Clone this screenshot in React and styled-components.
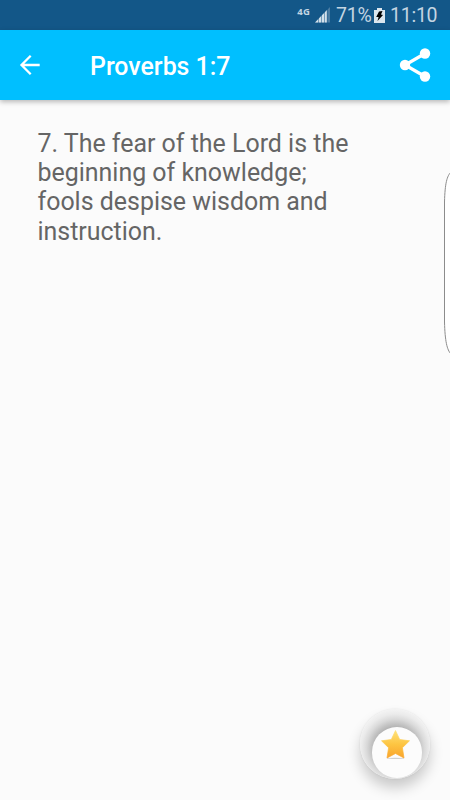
import React from "react";
import styled, { createGlobalStyle } from "styled-components";

const GlobalStyle = createGlobalStyle`
  body {
    margin: 0;
    background-color: #fbfbfb;
    font-family: Roboto, "Liberation Sans", sans-serif;
  }
`;

const Container = styled.div`
  position: relative;
  display: flex;
  flex-direction: column;
  width: 450px;
  height: 800px;
  overflow: hidden;
  background-color: #fbfbfb;
`;

const StatusBar = styled.div`
  display: flex;
  align-items: center;
  justify-content: flex-end;
  box-sizing: border-box;
  height: 30px;
  padding-right: 12px;
  background-color: #135788;
  color: #c3d5e2;
`;
const Network = styled.span`
  font-family: "Open Sans", sans-serif;
  font-size: 9.5px;
  font-weight: 700;
  letter-spacing: 0.2px;
  line-height: 10px;
  margin: 0 5px 7px 0;
`;
const StatusText = styled.span`
  font-size: 19.5px;
  letter-spacing: -0.25px;
  line-height: 30px;
  width: ${(props) => props.$width}px;
  padding-top: 2px;
  white-space: nowrap;
`;
const StatusIcon = styled.svg`
  flex: none;
  margin-right: ${(props) => props.$gap}px;
`;

const Toolbar = styled.header`
  display: flex;
  align-items: center;
  flex: none;
  box-sizing: border-box;
  height: 70px;
  padding: 0 19px 0 18px;
  background-color: #00bfff;
  color: white;
  box-shadow: 0 2px 5px rgba(0, 0, 0, 0.27);
`;
const IconButton = styled.button`
  display: flex;
  padding: 0;
  border: none;
  background: none;
  color: inherit;
  cursor: pointer;
`;
const Title = styled.h1`
  flex: 1;
  margin: 3px 0 0 48px;
  font-size: 24.9px;
  font-weight: 500;
  line-height: 30px;
`;

const Verse = styled.p`
  width: 330px;
  margin: 28.75px 0 0 37.5px;
  font-size: 24.95px;
  line-height: 29.3px;
  color: #656565;
`;

const EdgeHandle = styled.svg`
  position: absolute;
  top: 168px;
  right: 0;
`;

const Fab = styled.button`
  position: absolute;
  top: 709px;
  left: 360px;
  width: 70px;
  height: 70px;
  padding: 0;
  border: none;
  border-radius: 50%;
  background: radial-gradient(circle at 35.5px 39px, #a8a8a8 18px, #c2c2c2 24px, #dadada 29px, #ebebeb 34px, #f2f2f2 38px);
  box-shadow: 0 9px 14px rgba(0, 0, 0, 0.2), 0 0 2px rgba(0, 0, 0, 0.1);
  cursor: pointer;
`;
const FabFace = styled.span`
  position: absolute;
  top: 18px;
  left: 11.5px;
  width: 50.5px;
  height: 50.5px;
  border-radius: 50%;
  background-color: #fcfcfc;
`;
const Star = styled.svg`
  position: absolute;
  top: 2px;
  left: 8.5px;
`;

const App = () => {
  return (
    <Container>
      <GlobalStyle />
      <StatusBar>
        <Network>4G</Network>
        <StatusIcon $gap={6} width="15" height="16" viewBox="0 0 15 16">
          <path d="M0 15.5L15 0V15.5Z" fill="#4b7da3" />
          <path d="M0 15.5L12 3V15.5Z" fill="#d2e0ea" />
          <path d="M3.5 8V16M6.5 5V16M9.5 2V16M12.2 0V16" stroke="#135788" strokeWidth="0.5" />
        </StatusIcon>
        <StatusText $width={38}>71%</StatusText>
        <StatusIcon $gap={5} width="11" height="15" viewBox="0 0 11 15">
          <path d="M3 0h5v2h3v13H0V2h3z" fill="#dbe6ee" />
          <path d="M5 3.5L8.5 3L7 6.5L9 7L3.5 13L4.6 9H2.2Z" fill="#000" />
        </StatusIcon>
        <StatusText $width={48}>11:10</StatusText>
      </StatusBar>
      <Toolbar>
        <IconButton aria-label="Back">
          <svg width="24" height="24" viewBox="0 0 24 24">
            <path d="M21.7 12H3.5M12.7 2.8L3.5 12L12.7 21.2" fill="none" stroke="currentColor" strokeWidth="2.3" />
          </svg>
        </IconButton>
        <Title>Proverbs 1:7</Title>
        <IconButton aria-label="Share">
          <svg width="34" height="36" viewBox="0 0 34 36">
            <path d="M28 6.5L8 18L28 29.5" fill="none" stroke="currentColor" strokeWidth="3.2" />
            <circle cx="28" cy="6.5" r="5.2" fill="currentColor" />
            <circle cx="8" cy="18" r="5.2" fill="currentColor" />
            <circle cx="28" cy="29.5" r="5.2" fill="currentColor" />
          </svg>
        </IconButton>
      </Toolbar>
      <Verse>
        7. The fear of the Lord is the
        <br />
        beginning of knowledge;
        <br />
        fools despise wisdom and
        <br />
        instruction.
      </Verse>
      <EdgeHandle width="8" height="190" viewBox="0 0 8 190">
        <path d="M9 4C5 8 3 15 2.5 34V154C3 173 5 182 9 186" fill="#fff" stroke="#8c8c8c" strokeWidth="1" />
      </EdgeHandle>
      <Fab aria-label="Add to favourites">
        <FabFace>
          <Star width="31" height="31" viewBox="0 0 31 31">
            <defs>
              <linearGradient id="gold" x1="0" y1="0" x2="0" y2="1">
                <stop offset="0" stopColor="#ffe27a" />
                <stop offset="0.5" stopColor="#fdc542" />
                <stop offset="1" stopColor="#f9a42c" />
              </linearGradient>
            </defs>
            <ellipse cx="15.5" cy="29.4" rx="9" ry="0.6" fill="#d0d0d0" />
            <path
              d="M15.5 1.5L19.7 10.5L29.5 11.8L22.4 18.7L24 29L15.5 24.5L7 29L8.6 18.7L1.5 11.8L11.3 10.5Z"
              fill="url(#gold)"
              stroke="url(#gold)"
              strokeWidth="0.7"
              strokeLinejoin="round"
            />
          </Star>
        </FabFace>
      </Fab>
    </Container>
  );
};

export default App;
